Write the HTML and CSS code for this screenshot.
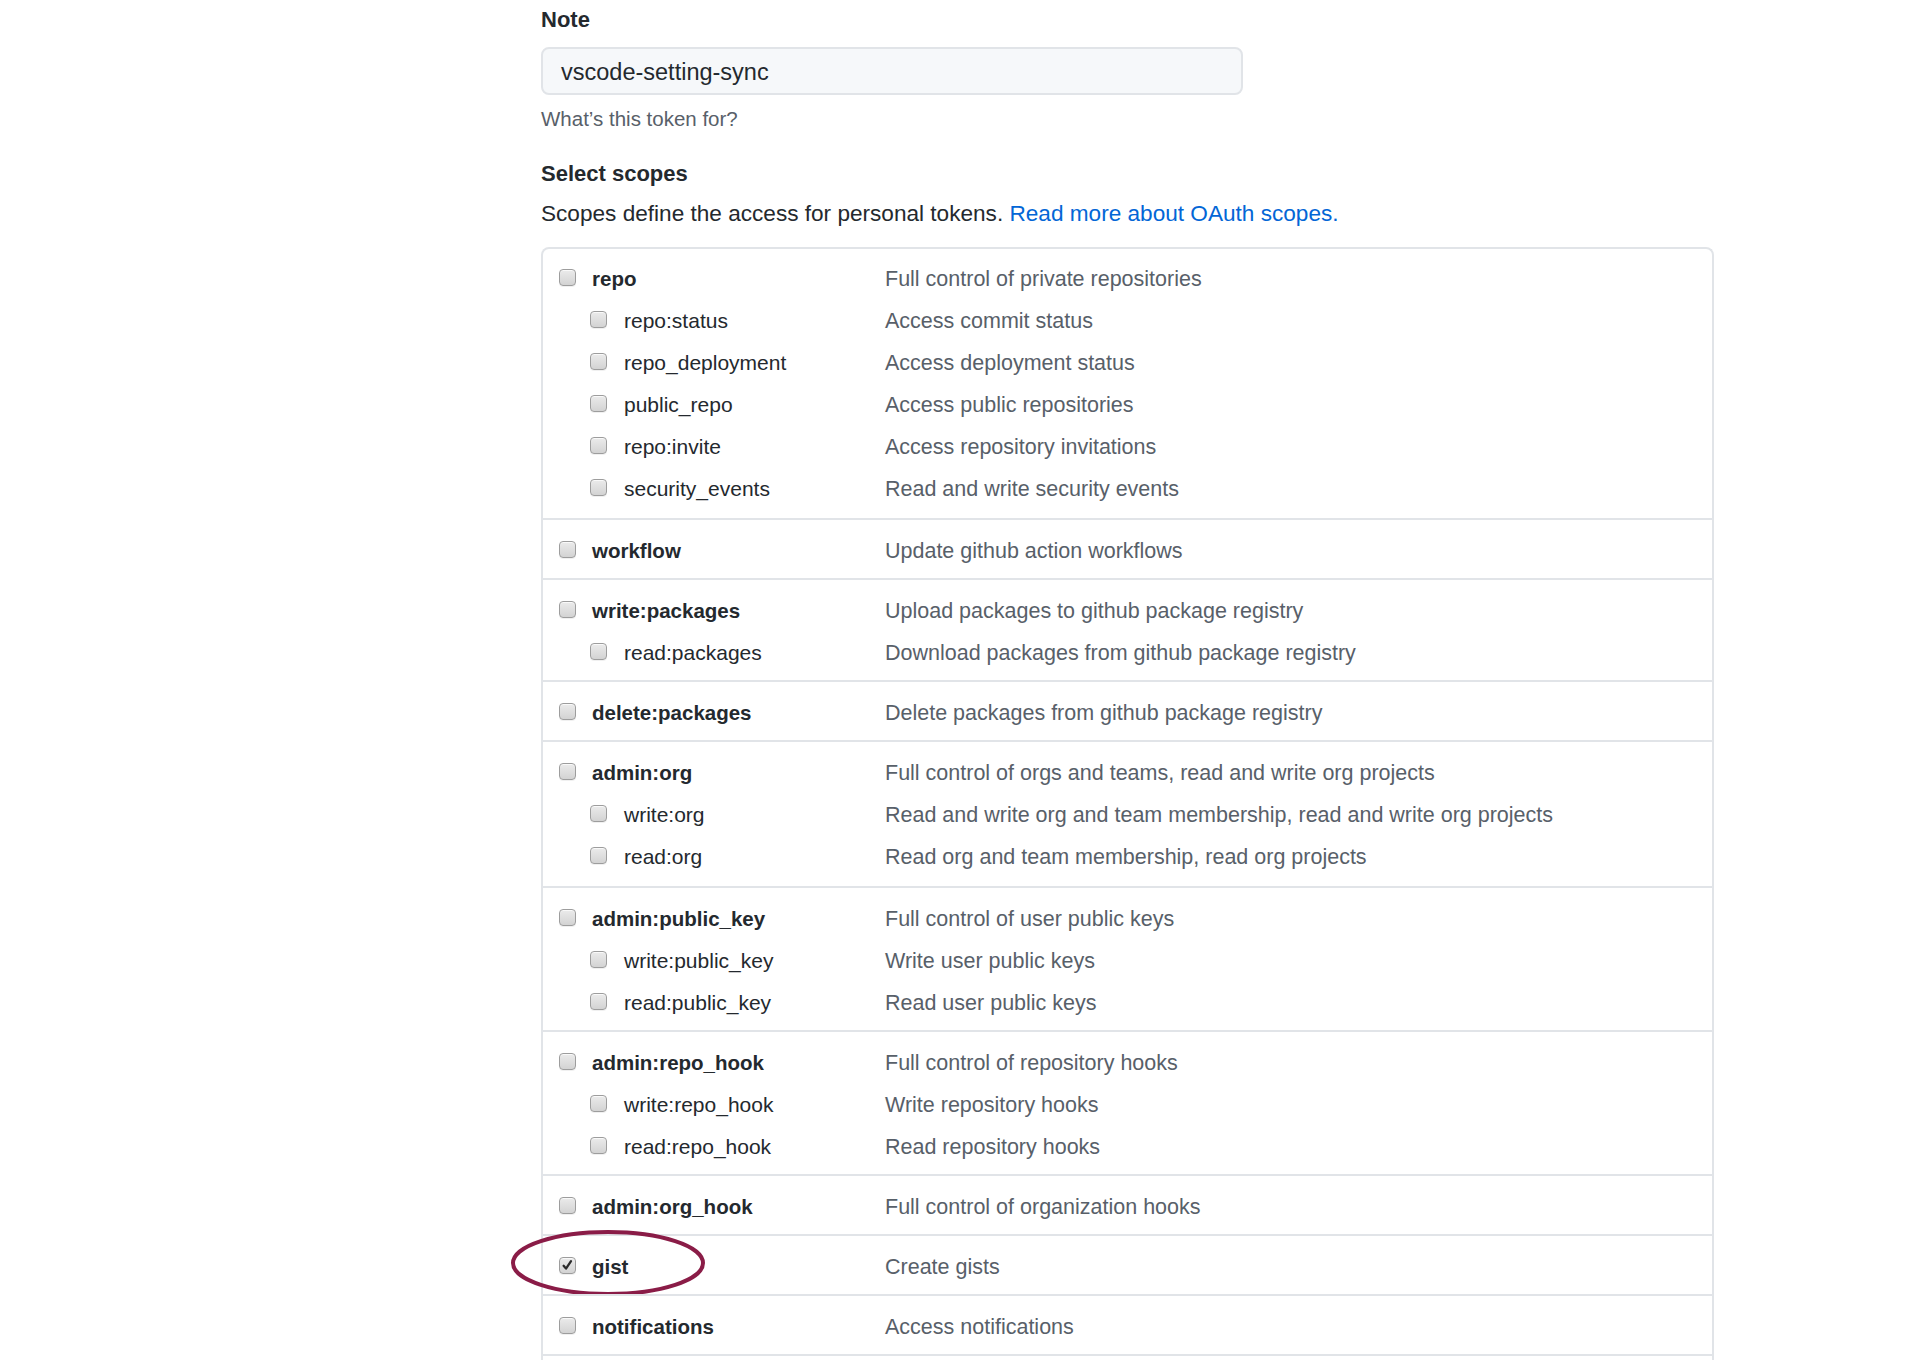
FILE: index.html
```html
<!DOCTYPE html>
<html lang="en">
<head>
<meta charset="utf-8">
<title>Personal access token</title>
<link rel="stylesheet" href="styles.css">
</head>
<body>
<div class="form">
  <label class="field-label">Note</label>
  <div class="input">vscode-setting-sync</div>
  <p class="note">What’s this token for?</p>
  <h3 class="scopes-title">Select scopes</h3>
  <p class="scopes-desc">Scopes define the access for personal tokens. <a href="#">Read more about OAuth scopes.</a></p>

  <div class="scopes">
    <div class="group first">
      <div class="row top"><span class="item"><span class="cb"></span><span class="name">repo</span></span><span class="desc">Full control of private repositories</span></div>
      <div class="row sub"><span class="item"><span class="cb"></span><span class="name">repo:status</span></span><span class="desc">Access commit status</span></div>
      <div class="row sub"><span class="item"><span class="cb"></span><span class="name">repo_deployment</span></span><span class="desc">Access deployment status</span></div>
      <div class="row sub"><span class="item"><span class="cb"></span><span class="name">public_repo</span></span><span class="desc">Access public repositories</span></div>
      <div class="row sub"><span class="item"><span class="cb"></span><span class="name">repo:invite</span></span><span class="desc">Access repository invitations</span></div>
      <div class="row sub"><span class="item"><span class="cb"></span><span class="name">security_events</span></span><span class="desc">Read and write security events</span></div>
    </div>
    <div class="group">
      <div class="row top"><span class="item"><span class="cb"></span><span class="name">workflow</span></span><span class="desc">Update github action workflows</span></div>
    </div>
    <div class="group">
      <div class="row top"><span class="item"><span class="cb"></span><span class="name">write:packages</span></span><span class="desc">Upload packages to github package registry</span></div>
      <div class="row sub"><span class="item"><span class="cb"></span><span class="name">read:packages</span></span><span class="desc">Download packages from github package registry</span></div>
    </div>
    <div class="group">
      <div class="row top"><span class="item"><span class="cb"></span><span class="name">delete:packages</span></span><span class="desc">Delete packages from github package registry</span></div>
    </div>
    <div class="group roomy">
      <div class="row top"><span class="item"><span class="cb"></span><span class="name">admin:org</span></span><span class="desc">Full control of orgs and teams, read and write org projects</span></div>
      <div class="row sub"><span class="item"><span class="cb"></span><span class="name">write:org</span></span><span class="desc">Read and write org and team membership, read and write org projects</span></div>
      <div class="row sub"><span class="item"><span class="cb"></span><span class="name">read:org</span></span><span class="desc">Read org and team membership, read org projects</span></div>
    </div>
    <div class="group">
      <div class="row top"><span class="item"><span class="cb"></span><span class="name">admin:public_key</span></span><span class="desc">Full control of user public keys</span></div>
      <div class="row sub"><span class="item"><span class="cb"></span><span class="name">write:public_key</span></span><span class="desc">Write user public keys</span></div>
      <div class="row sub"><span class="item"><span class="cb"></span><span class="name">read:public_key</span></span><span class="desc">Read user public keys</span></div>
    </div>
    <div class="group">
      <div class="row top"><span class="item"><span class="cb"></span><span class="name">admin:repo_hook</span></span><span class="desc">Full control of repository hooks</span></div>
      <div class="row sub"><span class="item"><span class="cb"></span><span class="name">write:repo_hook</span></span><span class="desc">Write repository hooks</span></div>
      <div class="row sub"><span class="item"><span class="cb"></span><span class="name">read:repo_hook</span></span><span class="desc">Read repository hooks</span></div>
    </div>
    <div class="group">
      <div class="row top"><span class="item"><span class="cb"></span><span class="name">admin:org_hook</span></span><span class="desc">Full control of organization hooks</span></div>
    </div>
    <div class="group">
      <div class="row top"><span class="item"><span class="cb checked"><svg viewBox="0 0 17 17" width="17" height="17"><path d="M4.6 8.8 L7 11.6 L12 4.2" fill="none" stroke="#2b2b2b" stroke-width="2.3" stroke-linecap="round" stroke-linejoin="round"/></svg></span><span class="name">gist</span></span><span class="desc">Create gists</span></div>
      <svg class="circle" width="200" height="70" viewBox="0 0 200 70"><ellipse cx="98" cy="33" rx="95" ry="31" fill="none" stroke="#8a1c47" stroke-width="4"/></svg>
    </div>
    <div class="group">
      <div class="row top"><span class="item"><span class="cb"></span><span class="name">notifications</span></span><span class="desc">Access notifications</span></div>
    </div>
    <div class="group continued"></div>
  </div>
</div>
</body>
</html>
```

FILE: styles.css
```css
html, body {
  margin: 0;
  padding: 0;
  background: #ffffff;
  height: 1360px;
  overflow: hidden;
}

body {
  font-family: "Liberation Sans", Arial, sans-serif;
  color: #24292e;
}

.form {
  padding: 6px 0 0 541px;
  width: 1173px;
}

.field-label {
  display: block;
  font-weight: bold;
  font-size: 22px;
  line-height: 28px;
}

.input {
  margin-top: 13px;
  width: 702px;
  height: 48px;
  box-sizing: border-box;
  border: 2px solid #e1e4e8;
  border-radius: 8px;
  background: #f6f8fa;
  padding-left: 18px;
  font-size: 23.5px;
  line-height: 46px;
  color: #24292e;
}

.note {
  margin: 11px 0 0;
  font-size: 20.5px;
  line-height: 26px;
  color: #586069;
}

.scopes-title {
  margin: 27px 0 0;
  font-size: 22px;
  line-height: 30px;
  font-weight: bold;
}

.scopes-desc {
  margin: 11px 0 0;
  font-size: 22.6px;
  line-height: 28px;
}

.scopes-desc a {
  color: #0366d6;
  text-decoration: none;
}

.scopes {
  margin-top: 19px;
  border: 2px solid #e1e4e8;
  border-bottom: none;
  border-radius: 8px 8px 0 0;
}

.group {
  position: relative;
  padding: 10px 0 6px;
}

.group.first {
  padding: 9px 0 8px;
}

.group.roomy {
  padding-bottom: 8px;
}

.group.continued {
  height: 42px;
}

.group + .group {
  border-top: 2px solid #e1e4e8;
}

.row {
  display: grid;
  grid-template-columns: 342px 1fr;
  align-items: center;
  height: 42px;
}

.item {
  display: flex;
  align-items: center;
  gap: 16px;
  padding-left: 16px;
  font-size: 21px;
}

.row.sub .item {
  padding-left: 47px;
  gap: 17px;
}

.row.top .name {
  font-weight: bold;
  font-size: 20.5px;
}

.desc {
  font-size: 21.5px;
  color: #586069;
}

.cb {
  display: block;
  width: 17px;
  height: 17px;
  box-sizing: border-box;
  border: 1px solid #9d9d9d;
  border-radius: 4px;
  background: linear-gradient(#ebebeb, #d3d3d3);
  box-shadow: inset 0 1px 0 rgba(255, 255, 255, 0.7), 0 1px 0 rgba(0, 0, 0, 0.06);
  margin-top: -3px;
}

.cb svg {
  display: block;
  margin: -1px;
}

.circle {
  position: absolute;
  left: -33px;
  top: -6px;
}
```
